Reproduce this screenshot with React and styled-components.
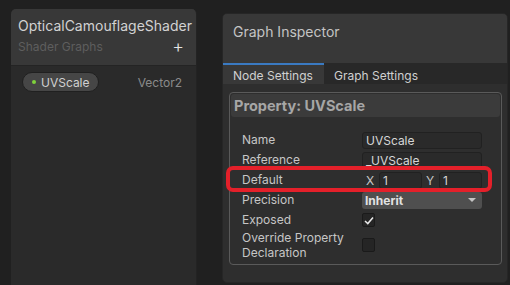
import React from 'react';
import styled, {createGlobalStyle} from 'styled-components';

const GlobalStyle = createGlobalStyle`
  html, body {
    margin: 0;
    padding: 0;
    background: #202020;
    font-family: Inter, "Noto Sans", sans-serif;
    overflow: hidden;
  }
`;

const Page = styled.div`
  width: 510px;
  height: 285px;
  display: flex;
  align-items: flex-start;
  gap: 25px;
  padding: 9px 0 0 11px;
  box-sizing: border-box;
  overflow: hidden;
`;

const Blackboard = styled.div`
  width: 186px;
  height: 290px;
  flex: none;
  display: flex;
  flex-direction: column;
  background: #2a2a2a;
  border-radius: 5px 5px 0 0;
  overflow: hidden;
  border-right: 1px solid #232323;
  box-sizing: border-box;
`;

const BlackboardHeader = styled.div`
  height: 57px;
  background: #383838;
  border-bottom: 1px solid #242424;
  padding: 8px 7px 0 7px;
  box-sizing: border-box;
  display: flex;
  flex-direction: column;
`;

const Title = styled.div`
  font-size: 14px;
  color: #d2d2d2;
  line-height: 18px;
  white-space: nowrap;
`;

const SubRow = styled.div`
  display: flex;
  justify-content: space-between;
  align-items: center;
  margin-top: 4px;
`;

const Subtitle = styled.div`
  font-size: 12px;
  color: #5e5e5e;
  line-height: 16px;
`;

const AddButton = styled.div`
  font-size: 18px;
  line-height: 16px;
  color: #e4e4e4;
  margin-right: 5px;
  font-weight: 300;
`;

const PropertyRow = styled.div`
  display: flex;
  align-items: center;
  justify-content: space-between;
  padding: 6px 14px 0 11px;
`;

const Pill = styled.div`
  display: flex;
  align-items: center;
  gap: 5px;
  height: 20px;
  padding: 0 8px 0 9px;
  background: #464646;
  border: 1px solid #202020;
  border-radius: 10px;
  box-sizing: border-box;
  font-size: 12px;
  color: #d0d0d0;
  white-space: nowrap;
`;

const Dot = styled.span`
  flex: none;
  width: 4px;
  height: 4px;
  border-radius: 50%;
  background: ${p => p.color};
`;

const TypeLabel = styled.div`
  font-size: 12px;
  color: #8a8a8a;
`;

const Inspector = styled.div`
  margin-top: 4px;
  width: 286px;
  height: 270px;
  flex: none;
  display: flex;
  flex-direction: column;
  background: #2e2e2e;
  border-radius: 5px;
  overflow: hidden;
  border: 1px solid #262626;
  box-sizing: border-box;
`;

const InspectorHeader = styled.div`
  height: 49px;
  background: #383838;
  padding: 9px 10px 0;
  box-sizing: border-box;
  font-size: 14px;
  color: #c4c4c4;
  line-height: 18px;
`;

const TabStrip = styled.div`
  height: 21px;
  display: flex;
  background: #282828;
`;

const Tab = styled.div`
  height: 21px;
  box-sizing: border-box;
  padding: 2px 10px 0;
  display: flex;
  align-items: center;
  font-size: 12px;
  color: #d0d0d0;
  background: ${p => (p.$active ? '#383838' : 'transparent')};
  border-top: 2px solid ${p => (p.$active ? '#3a7ac2' : 'transparent')};
  width: ${p => (p.$active ? '101px' : 'auto')};
`;

const Body = styled.div`
  padding: 8px 5px 0 6px;
`;

const Section = styled.div`
  border: 1px solid #5a5a5a;
  border-radius: 4px;
  padding: 1px 1px 10px;
  height: 173px;
  box-sizing: border-box;
`;

const SectionHeader = styled.div`
  height: 23px;
  background: #3b3b3b;
  border-radius: 3px;
  padding: 0 3px;
  display: flex;
  align-items: center;
  font-size: 14.5px;
  font-weight: 700;
  color: #a6a6a6;
`;

const Fields = styled.div`
  padding: 13px 18px 0 11px;
  display: flex;
  flex-direction: column;
`;

const Field = styled.div`
  position: relative;
  display: grid;
  grid-template-columns: 120px 1fr;
  align-items: center;
  min-height: 20px;

  ${p =>
    p.$marked &&
    `
    &::after {
      content: '';
      position: absolute;
      left: -16px;
      right: -10px;
      top: -4px;
      bottom: -2px;
      border: 4px solid #e4202a;
      border-radius: 7px;
      pointer-events: none;
    }
  `}
`;

const Label = styled.div`
  font-size: 12px;
  color: #c6c6c6;
  line-height: ${p => (p.$tall ? '15px' : '18px')};
`;

const TextBox = styled.div`
  height: 17px;
  box-sizing: border-box;
  background: #2a2a2a;
  border: 1px solid #212121;
  border-radius: 3px;
  padding: 0 3px;
  font-size: 12px;
  color: #d6d6d6;
  display: flex;
  align-items: center;
  ${p => p.$grow && 'flex: 1;'}
`;

const VectorRow = styled.div`
  display: flex;
  align-items: center;
  gap: 4px;
  padding-left: 4px;
`;

const Axis = styled.span`
  font-size: 12px;
  color: #c6c6c6;
  width: 9px;
`;

const Dropdown = styled.div`
  height: 17px;
  box-sizing: border-box;
  background: #4f4f4f;
  border-radius: 3px;
  padding: 0 6px 0 3px;
  display: flex;
  align-items: center;
  justify-content: space-between;
  font-size: 12px;
  font-weight: 700;
  color: #e2e2e2;
`;

const Caret = styled.span`
  width: 0;
  height: 0;
  border-left: 4px solid transparent;
  border-right: 4px solid transparent;
  border-top: 4px solid #c4c4c4;
`;

const Checkbox = styled.div`
  width: 13px;
  height: 14px;
  box-sizing: border-box;
  background: #252525;
  border: 1px solid #1a1a1a;
  border-radius: 2px;
  display: flex;
  align-items: center;
  justify-content: center;
`;

function Check() {
    return (
        <svg width="10" height="9" viewBox="0 0 10 9">
            <path d="M1 5 L3.8 7.6 L9 1.5" fill="none" stroke="#e8e8e8" strokeWidth="1.5"/>
        </svg>
    );
}

export default function App() {
    return (
        <Page>
            <GlobalStyle/>
            <Blackboard>
                <BlackboardHeader>
                    <Title>OpticalCamouflageShader</Title>
                    <SubRow>
                        <Subtitle>Shader Graphs</Subtitle>
                        <AddButton>+</AddButton>
                    </SubRow>
                </BlackboardHeader>
                <PropertyRow>
                    <Pill>
                        <Dot color="#7fd23c"/>
                        UVScale
                    </Pill>
                    <TypeLabel>Vector2</TypeLabel>
                </PropertyRow>
            </Blackboard>

            <Inspector>
                <InspectorHeader>Graph Inspector</InspectorHeader>
                <TabStrip>
                    <Tab $active>Node Settings</Tab>
                    <Tab>Graph Settings</Tab>
                </TabStrip>
                <Body>
                    <Section>
                        <SectionHeader>Property: UVScale</SectionHeader>
                        <Fields>
                            <Field>
                                <Label>Name</Label>
                                <TextBox>UVScale</TextBox>
                            </Field>
                            <Field>
                                <Label>Reference</Label>
                                <TextBox>_UVScale</TextBox>
                            </Field>
                            <Field $marked>
                                <Label>Default</Label>
                                <VectorRow>
                                    <Axis>X</Axis>
                                    <TextBox $grow>1</TextBox>
                                    <Axis>Y</Axis>
                                    <TextBox $grow>1</TextBox>
                                </VectorRow>
                            </Field>
                            <Field>
                                <Label>Precision</Label>
                                <Dropdown>
                                    Inherit
                                    <Caret/>
                                </Dropdown>
                            </Field>
                            <Field>
                                <Label>Exposed</Label>
                                <Checkbox><Check/></Checkbox>
                            </Field>
                            <Field>
                                <Label $tall>Override Property<br/>Declaration</Label>
                                <Checkbox/>
                            </Field>
                        </Fields>
                    </Section>
                </Body>
            </Inspector>
        </Page>
    );
}
